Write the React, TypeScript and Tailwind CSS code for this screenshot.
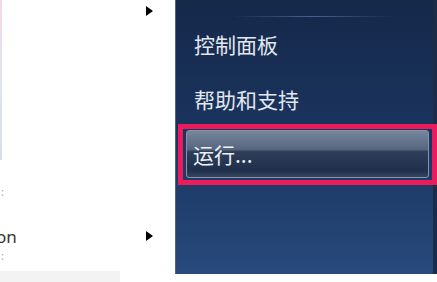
import React from 'react';

const font = { fontFamily: '"Noto Sans CJK SC", "Noto Sans", sans-serif' };

function Arrow() {
  return (
    <svg width="7" height="10" viewBox="0 0 7 10" className="shrink-0">
      <path d="M0 0 L7 5 L0 10 Z" fill="#000" />
    </svg>
  );
}

function MenuLink({ label }: { label: string }) {
  return (
    <div className="h-[55px] flex items-center pl-[18px] text-[21px] leading-none text-[#e2e8f0]" style={font}>
      {label}
    </div>
  );
}

export default function App() {
  return (
    <div className="w-[437px] h-[282px] bg-white flex overflow-hidden" style={font}>
      <div className="w-[175px] h-full flex flex-col relative overflow-hidden">
        <div className="absolute left-0 top-0 w-[2px] h-[160px] bg-gradient-to-b from-[#f4d8e6] via-[#dfe4ee] to-[#d6dfea]" />
        <div className="h-[20px] flex items-center justify-end pr-[22px] pt-[1px]">
          <Arrow />
        </div>
        <div className="h-[166px]" />
        <div className="text-[#aaa] text-[11px] leading-none pl-px">:</div>
        <div className="h-[30px]" />
        <div className="flex items-center justify-between pr-[22px] h-[18px]">
          <span className="text-[17px] text-[#333] pl-px leading-none -translate-x-[5px]" style={{ fontFamily: '"Noto Sans", sans-serif' }}>on</span>
          <Arrow />
        </div>
        <div className="text-[#aaa] text-[11px] leading-none pl-px mt-[5px]">:</div>
        <div className="flex-1" />
        <div className="w-[120px] h-[11px] bg-[#f3f3f3]" />
      </div>
      <div className="w-[262px] h-[274px] flex">
        <div className="w-[258px] h-full bg-gradient-to-b from-[#15284a] via-[#1b355f] to-[#274a7c] border-l border-[#4d6285] flex flex-col">
          <div className="h-[17px] flex items-end pl-[56px]">
            <div className="w-[162px] h-px bg-gradient-to-r from-transparent via-[#4a6190] to-transparent" />
          </div>
          <MenuLink label="控制面板" />
          <MenuLink label="帮助和支持" />
          <div className="relative z-10 mt-[-3px] ml-[2px] mr-[-4px] h-[61px] border-[5px] border-[#ec1b5c] pt-[1px] pl-[3px] pr-[3px] pb-[2px]">
            <div className="h-full rounded-[3px] border border-[#8493a8] bg-[linear-gradient(to_bottom,#75859b_0%,#56667e_40%,#2e3e5a_45%,#1f2f4c_85%,#33455f_100%)] flex items-center pl-[6px] text-[21px] leading-none text-[#eef2f6]" style={font}>
              运行...
            </div>
          </div>
        </div>
        <div className="w-[4px] h-full bg-[#1b2c48]" />
      </div>
    </div>
  );
}
